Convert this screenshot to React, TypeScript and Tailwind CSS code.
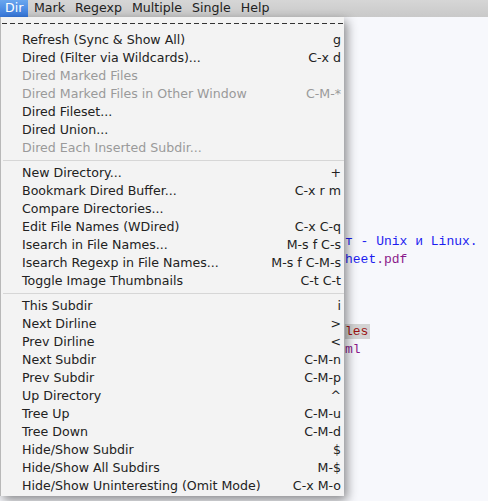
import React from 'react';

type Item = { label: string; key?: string; disabled?: boolean } | 'sep';

const items: Item[] = [
  { label: 'Refresh (Sync & Show All)', key: 'g' },
  { label: 'Dired (Filter via Wildcards)...', key: 'C-x d' },
  { label: 'Dired Marked Files', disabled: true },
  { label: 'Dired Marked Files in Other Window', key: 'C-M-*', disabled: true },
  { label: 'Dired Fileset...' },
  { label: 'Dired Union...' },
  { label: 'Dired Each Inserted Subdir...', disabled: true },
  'sep',
  { label: 'New Directory...', key: '+' },
  { label: 'Bookmark Dired Buffer...', key: 'C-x r m' },
  { label: 'Compare Directories...' },
  { label: 'Edit File Names (WDired)', key: 'C-x C-q' },
  { label: 'Isearch in File Names...', key: 'M-s f C-s' },
  { label: 'Isearch Regexp in File Names...', key: 'M-s f C-M-s' },
  { label: 'Toggle Image Thumbnails', key: 'C-t C-t' },
  'sep',
  { label: 'This Subdir', key: 'i' },
  { label: 'Next Dirline', key: '>' },
  { label: 'Prev Dirline', key: '<' },
  { label: 'Next Subdir', key: 'C-M-n' },
  { label: 'Prev Subdir', key: 'C-M-p' },
  { label: 'Up Directory', key: '^' },
  { label: 'Tree Up', key: 'C-M-u' },
  { label: 'Tree Down', key: 'C-M-d' },
  { label: 'Hide/Show Subdir', key: '$' },
  { label: 'Hide/Show All Subdirs', key: 'M-$' },
  { label: 'Hide/Show Uninteresting (Omit Mode)', key: 'C-x M-o' },
];

const menus = ['Mark', 'Regexp', 'Multiple', 'Single', 'Help'];

// editor lines behind the menu, 18px each, starting right under the bar
const editorLines: React.ReactNode[] = Array.from({ length: 27 }, () => null);
editorLines[12] = <span className="text-[#1c1cf0]">т - Unix и Linux.</span>;
editorLines[13] = (
  <>
    <span className="text-[#1c1cf0]">heet</span>
    <span className="text-[#8b1a8b]">.pdf</span>
  </>
);
editorLines[17] = <span className="bg-[#d3d3d3] text-[#9b1010] pr-[2px]">les</span>;
editorLines[18] = <span className="text-[#8b1a8b]">ml</span>;

export default function App() {
  return (
    <div className="relative w-[488px] h-[501px] overflow-hidden bg-[#f7f8fc] font-['DejaVu_Sans',sans-serif] text-[12.6px]">
      {/* Menu bar */}
      <div className="flex h-[17px] items-center bg-gradient-to-b from-[#d6d6d6] to-[#c9c9c9] text-[#222]">
        <div className="flex h-full items-center bg-gradient-to-b from-[#6aa6ee] to-[#3577dc] pl-[5px] w-[28px] text-white">Dir</div>
        <div className="flex gap-[10px] pl-[6px]">
          {menus.map((m) => (
            <span key={m}>{m}</span>
          ))}
        </div>
      </div>

      {/* Editor buffer */}
      <div className="pl-[345px] font-['Liberation_Mono',monospace] text-[13px]">
        {editorLines.map((l, i) => (
          <div key={i} className="h-[18px] leading-[18px] whitespace-nowrap">
            {l}
          </div>
        ))}
      </div>

      {/* Dropdown */}
      <div className="absolute left-0 top-[17px] w-[344px] bg-[#f3f3f3] border-l border-[#b8b8b8] shadow-[3px_4px_10px_rgba(0,0,0,0.45)] pb-[1px]">
        <div className="pt-[6px] pb-[7px]">
          <div className="ml-[1px] h-[1px] bg-[repeating-linear-gradient(to_right,#333_0_5px,transparent_5px_8px)]" />
        </div>
        {items.map((it, i) =>
          it === 'sep' ? (
            <div key={i} className="py-[3px] pl-[2px]">
              <div className="h-[1px] bg-[#d6d6d6]" />
            </div>
          ) : (
            <div
              key={i}
              className={`flex h-[18px] items-center justify-between pl-[21px] pr-[3px] whitespace-nowrap ${
                it.disabled ? 'text-[#9a9a9a]' : 'text-[#222]'
              }`}
            >
              <span>{it.label}</span>
              {it.key && <span>{it.key}</span>}
            </div>
          )
        )}
      </div>
    </div>
  );
}
